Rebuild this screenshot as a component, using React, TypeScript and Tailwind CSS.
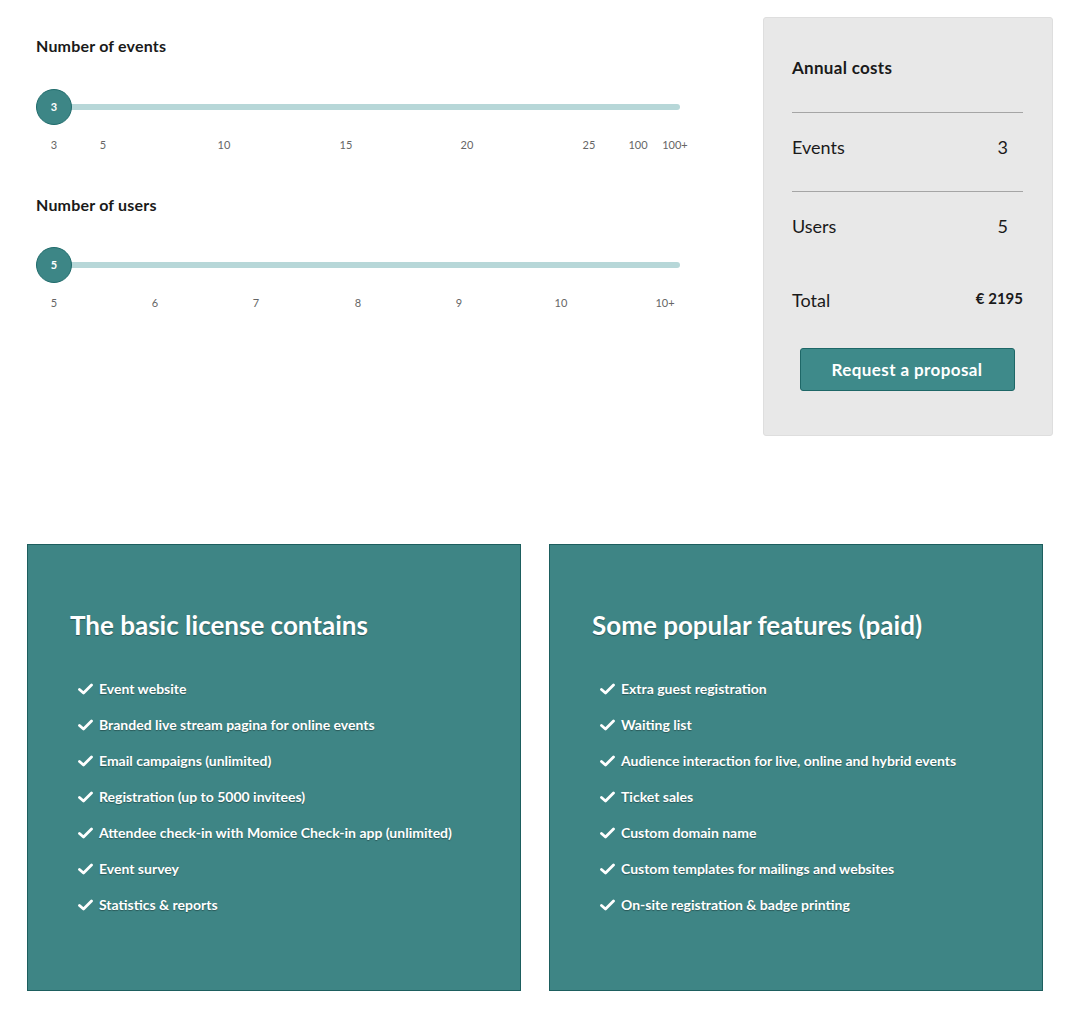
import React from "react";

const font = "[font-family:Lato,'Open_Sans',sans-serif]";

type Tick = { label: string; x: number };

const eventTicks: Tick[] = [
  { label: "3", x: 18 },
  { label: "5", x: 67 },
  { label: "10", x: 188 },
  { label: "15", x: 310 },
  { label: "20", x: 431 },
  { label: "25", x: 553 },
  { label: "100", x: 602 },
  { label: "100+", x: 639 },
];

const userTicks: Tick[] = [
  { label: "5", x: 18 },
  { label: "6", x: 119 },
  { label: "7", x: 220 },
  { label: "8", x: 322 },
  { label: "9", x: 423 },
  { label: "10", x: 525 },
  { label: "10+", x: 629 },
];

function Slider({ value, ticks }: { value: string; ticks: Tick[] }) {
  return (
    <div className="w-[662px]">
      <div className="relative h-9">
        <div className="absolute left-[18px] right-[18px] top-[15px] h-[6px] rounded-full bg-[#b7d7d8]" />
        <div className="absolute left-0 top-0 flex h-9 w-9 items-center justify-center rounded-full border border-[#1f6b6b] bg-[#3d8686] text-[11px] font-bold text-white">
          {value}
        </div>
      </div>
      <div className="relative mt-3 h-4">
        {ticks.map((t) => (
          <span
            key={t.label}
            className="absolute top-0 -translate-x-1/2 text-[11px] leading-4 text-[#666]"
            style={{ left: t.x }}
          >
            {t.label}
          </span>
        ))}
      </div>
    </div>
  );
}

function Check() {
  return (
    <svg width="15" height="12" viewBox="0 0 15 12" className="shrink-0">
      <path d="M1.5 6.5 L5.5 10 L13.5 2" fill="none" stroke="white" strokeWidth="2.8" strokeLinecap="round" strokeLinejoin="round" />
    </svg>
  );
}

function FeatureCard({ title, items }: { title: string; items: string[] }) {
  return (
    <div className="h-[447px] w-[494px] border border-[#1d5e5e] bg-[#3e8585] pl-[42px] pt-[64px] text-white [text-shadow:0_1px_1px_rgba(0,0,0,0.35)]">
      <h2 className="text-[26px] font-bold leading-8">{title}</h2>
      <ul className="ml-[8px] mt-[38px] flex flex-col gap-4">
        {items.map((item) => (
          <li key={item} className="flex h-5 items-center gap-[6px] text-[14px] font-bold leading-5">
            <Check />
            <span>{item}</span>
          </li>
        ))}
      </ul>
    </div>
  );
}

export default function App() {
  return (
    <div className={`h-[1016px] w-[1070px] bg-white ${font} text-[#1a1a1a]`}>
      {/* Calculator */}
      <div className="flex pt-[17px]">
        <div className="w-[763px] pl-9 pt-[19px]">
          <h3 className="text-[16px] font-bold leading-5 tracking-[0.2px]">Number of events</h3>
          <div className="mt-[33px]">
            <Slider value="3" ticks={eventTicks} />
          </div>
          <h3 className="mt-[42px] text-[16px] font-bold leading-5 tracking-[0.2px]">Number of users</h3>
          <div className="mt-8">
            <Slider value="5" ticks={userTicks} />
          </div>
        </div>

        <div className="h-[419px] w-[290px] rounded-[3px] border border-[#dedede] bg-[#e8e8e8] pl-[28px] pr-[29px] pt-[40px]">
          <h3 className="text-[17px] font-bold leading-5 tracking-[0.3px]">Annual costs</h3>
          <div className="mt-[34px] h-px bg-[#a5a5a5]" />
          <div className="mt-[22px] flex items-center justify-between pr-[15px] text-[18px] leading-6">
            <span>Events</span>
            <span>3</span>
          </div>
          <div className="mt-[32px] h-px bg-[#a5a5a5]" />
          <div className="mt-[22px] flex items-center justify-between pr-[15px] text-[18px] leading-6">
            <span>Users</span>
            <span>5</span>
          </div>
          <div className="mt-[50px] flex items-start justify-between text-[18px] leading-6">
            <span>Total</span>
            <span className="text-[15px] font-bold leading-5">€ 2195</span>
          </div>
          <div className="mt-[36px] flex justify-center">
            <button className="-ml-[1px] h-[43px] w-[215px] rounded-[3px] border border-[#1e6767] bg-[#3e8a8a] text-[17px] font-bold tracking-[0.4px] text-white">
              Request a proposal
            </button>
          </div>
        </div>
      </div>

      {/* Features */}
      <div className="mt-[108px] flex gap-[28px] pl-[27px]">
        <FeatureCard
          title="The basic license contains"
          items={[
            "Event website",
            "Branded live stream pagina for online events",
            "Email campaigns (unlimited)",
            "Registration (up to 5000 invitees)",
            "Attendee check-in with Momice Check-in app (unlimited)",
            "Event survey",
            "Statistics & reports",
          ]}
        />
        <FeatureCard
          title="Some popular features (paid)"
          items={[
            "Extra guest registration",
            "Waiting list",
            "Audience interaction for live, online and hybrid events",
            "Ticket sales",
            "Custom domain name",
            "Custom templates for mailings and websites",
            "On-site registration & badge printing",
          ]}
        />
      </div>
    </div>
  );
}
